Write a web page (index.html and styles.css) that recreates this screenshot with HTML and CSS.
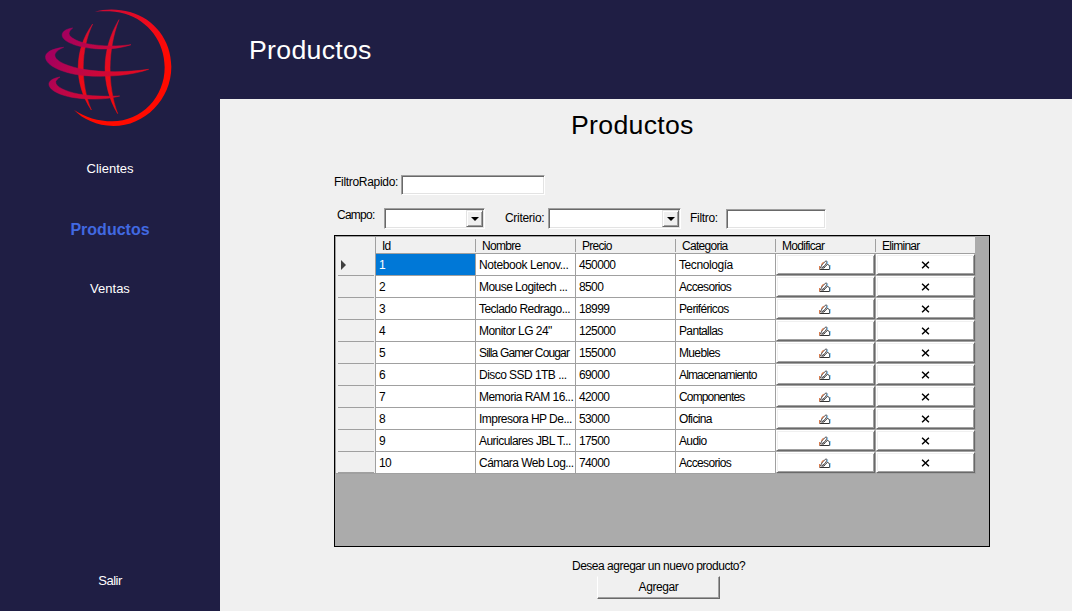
FILE: index.html
```html
<!DOCTYPE html>
<html lang="es">
<head>
<meta charset="utf-8">
<title>Productos</title>
<link rel="stylesheet" href="styles.css">
</head>
<body>
<svg class="defs" width="0" height="0">
  <symbol id="hand" viewBox="0 0 12 10">
    <path d="M.5 9.5H10.5V5.5L8.5 4.5L7 5.5L5 8H2.5" fill="none" stroke="#333" stroke-width="1"/>
    <path d="M1 8.5L3.5 4L7 .8L8.3 1.8L6 5.5L2.5 8" fill="none" stroke="#4a4a50" stroke-width="1"/>
    <path d="M.6 6V9.4M2.4 4.6L4.6 2.2" stroke="#d87848" stroke-width="1.1"/>
    <path d="M11.2 5V9.5M8.6 1.6V4" stroke="#7cc4f0" stroke-width="1"/>
  </symbol>
  <symbol id="cross" viewBox="0 0 8 8">
    <path d="M.6 .8L7.4 7.2M7.4 .8L.6 7.2" stroke="#000" stroke-width="1.5"/>
  </symbol>
</svg>
<div class="app">
  <aside class="sidebar">
    <svg class="logo" width="160" height="135" viewBox="0 0 480 405">
      <defs>
        <linearGradient id="g" gradientUnits="userSpaceOnUse" x1="90" y1="130" x2="330" y2="290">
          <stop offset="0" stop-color="#a6005d"/><stop offset=".3" stop-color="#bd0648"/><stop offset="1" stop-color="#ef0a16"/>
        </linearGradient>
        <linearGradient id="r" gradientUnits="userSpaceOnUse" x1="180" y1="30" x2="300" y2="240">
          <stop offset="0" stop-color="#c90a38"/><stop offset=".5" stop-color="#ee0a1c"/><stop offset="1" stop-color="#ff0a00"/>
        </linearGradient>
        <linearGradient id="m" gradientUnits="userSpaceOnUse" x1="0" y1="70" x2="0" y2="330">
          <stop offset="0" stop-color="#d80c30"/><stop offset="1" stop-color="#f40a0c"/>
        </linearGradient>
      </defs>
      <path fill="url(#r)" d="M195 35C225 26 265 26 300 36C372 56 424 120 424 200C424 297 345 378 250 378C200 377 160 358 132 330C165 352 205 364 247 364C335 364 404 292 404 202C404 125 355 62 285 41C255 33 225 33 195 35Z"/>
      <path fill="url(#m)" stroke="url(#m)" stroke-width="1.5" d="M188 72C131 150 131 250 184 330C151 250 151 150 188 72ZM267 59C212 150 212 255 263 341C232 255 232 150 267 59Z"/>
      <path fill="url(#g)" stroke="url(#g)" stroke-width="1.5" d="M128 84C105 87 94 97 97 109C103 128 150 143 195 146C235 149 275 144 303 134C265 139 215 140 170 131C135 123 112 108 118 97C119 92 123 88 128 84ZM101 142C65 146 43 158 47 175C53 202 110 222 165 227C235 232 305 226 356 208C290 217 220 218 160 208C105 198 70 180 75 162C78 154 90 146 101 142ZM90 231C68 235 55 243 57 255C62 277 110 293 160 296C205 299 240 296 269 288C225 290 180 288 145 282C105 274 76 260 77 245C79 240 84 235 90 231Z"/>
    </svg>
    <nav class="menu">
      <a class="item">Clientes</a>
      <a class="item active">Productos</a>
      <a class="item">Ventas</a>
    </nav>
    <a class="item exit">Salir</a>
  </aside>
  <div class="main">
    <header class="topbar">Productos</header>
    <main class="content">
      <h1 class="title">Productos</h1>
      <div class="quick"><label class="quick-label">FiltroRapido:</label><span class="box quick-box"></span></div>
      <div class="filters">
        <label class="campo">Campo:</label>
        <span class="box combo combo-a"><i class="drop"></i></span>
        <label class="criterio">Criterio:</label>
        <span class="box combo combo-b"><i class="drop"></i></span>
        <label class="filtro">Filtro:</label>
        <span class="box filtro-box"></span>
      </div>
      <section class="grid">
        <div class="row head"><span class="rh"></span><span>Id</span><span>Nombre</span><span>Precio</span><span>Categoria</span><span>Modificar</span><span class="end">Eliminar</span></div>
        <div class="row"><span class="rh"><i class="pointer"></i></span><span class="num selected">1</span><span class="dots loose">Notebook Lenov...</span><span class="num">450000</span><span class="loose">Tecnología</span><b><svg class="hand"><use href="#hand"/></svg></b><b><svg class="cross"><use href="#cross"/></svg></b></div>
        <div class="row"><span class="rh"></span><span class="num">2</span><span class="dots">Mouse Logitech ...</span><span class="num">8500</span><span>Accesorios</span><b><svg class="hand"><use href="#hand"/></svg></b><b><svg class="cross"><use href="#cross"/></svg></b></div>
        <div class="row"><span class="rh"></span><span class="num">3</span><span class="dots">Teclado Redrago...</span><span class="num">18999</span><span>Periféricos</span><b><svg class="hand"><use href="#hand"/></svg></b><b><svg class="cross"><use href="#cross"/></svg></b></div>
        <div class="row"><span class="rh"></span><span class="num">4</span><span class="dots">Monitor LG 24"</span><span class="num">125000</span><span>Pantallas</span><b><svg class="hand"><use href="#hand"/></svg></b><b><svg class="cross"><use href="#cross"/></svg></b></div>
        <div class="row"><span class="rh"></span><span class="num">5</span><span class="tight">Silla Gamer Cougar</span><span class="num">155000</span><span>Muebles</span><b><svg class="hand"><use href="#hand"/></svg></b><b><svg class="cross"><use href="#cross"/></svg></b></div>
        <div class="row"><span class="rh"></span><span class="num">6</span><span class="dots">Disco SSD 1TB ...</span><span class="num">69000</span><span class="tight">Almacenamiento</span><b><svg class="hand"><use href="#hand"/></svg></b><b><svg class="cross"><use href="#cross"/></svg></b></div>
        <div class="row"><span class="rh"></span><span class="num">7</span><span class="dots">Memoria RAM 16...</span><span class="num">42000</span><span class="tight">Componentes</span><b><svg class="hand"><use href="#hand"/></svg></b><b><svg class="cross"><use href="#cross"/></svg></b></div>
        <div class="row"><span class="rh"></span><span class="num">8</span><span class="dots">Impresora HP De...</span><span class="num">53000</span><span>Oficina</span><b><svg class="hand"><use href="#hand"/></svg></b><b><svg class="cross"><use href="#cross"/></svg></b></div>
        <div class="row"><span class="rh"></span><span class="num">9</span><span class="dots">Auriculares JBL T...</span><span class="num">17500</span><span>Audio</span><b><svg class="hand"><use href="#hand"/></svg></b><b><svg class="cross"><use href="#cross"/></svg></b></div>
        <div class="row last"><span class="rh"></span><span class="num">10</span><span class="dots">Cámara Web Log...</span><span class="num">74000</span><span>Accesorios</span><b><svg class="hand"><use href="#hand"/></svg></b><b><svg class="cross"><use href="#cross"/></svg></b></div>
      </section>
      <p class="ask">Desea agregar un nuevo producto?</p>
      <button class="add">Agregar</button>
    </main>
  </div>
</div>
</body>
</html>
```
FILE: styles.css
```css
* { box-sizing: border-box; }
body { margin: 0; font: 12px/14px "Liberation Sans", Arial, sans-serif; letter-spacing: -.49px; color: #000; }
.defs { display: block; }
.app { display: flex; width: 1072px; height: 611px; overflow: hidden; background: #1f1e44; }
.sidebar { width: 220px; display: flex; flex-direction: column; }
.logo { display: block; margin-left: 30px; flex: none; }
.menu { display: flex; flex-direction: column; padding-top: 24px; gap: 40px; }
.item { font-size: 13px; line-height: 20px; letter-spacing: 0; color: #fff; text-align: center; }
.item.active { font-size: 16px; font-weight: bold; color: #4169e1; padding-top: 1px; margin-bottom: -1px; }
.item.exit { margin-top: auto; margin-bottom: 20px; letter-spacing: -.5px; }
.main { width: 852px; display: flex; flex-direction: column; }
.topbar { height: 99px; padding: 35px 0 0 29px; font-size: 26.67px; line-height: 30px; letter-spacing: .3px; color: #fff; }
.content { flex: 1; background: #f0f0f0; padding-left: 114px; }
.title { margin: 11px 0 0 237px; font-size: 26.67px; line-height: 30px; letter-spacing: .3px; font-weight: normal; }
.quick { display: flex; margin-top: 35px; height: 20px; }
.quick-label { width: 67px; letter-spacing: -.3px; }
.box { display: block; background: #fff; border: 1px solid; border-color: #a0a0a0 #fff #fff #a0a0a0; box-shadow: inset 1px 1px #696969, inset -1px -1px #e3e3e3; }
.quick-box { width: 144px; height: 20px; }
.filters { display: flex; height: 27px; margin-top: 13px; }
.campo { width: 50px; padding-left: 3px; letter-spacing: -.75px; }
.criterio { width: 63px; padding: 3px 0 0 20px; letter-spacing: -.3px; }
.filtro { width: 45px; padding: 3px 0 0 9px; letter-spacing: -.3px; }
.combo { display: flex; justify-content: flex-end; height: 21px; padding: 1px; }
.combo-a { width: 101px; }
.combo-b { width: 133px; }
.filtro-box { width: 100px; height: 20px; margin-top: 1px; }
.drop { width: 17px; height: 17px; background: #f0f0f0; border: 1px solid; border-color: #e3e3e3 #696969 #696969 #e3e3e3; box-shadow: inset 1px 1px #fff, inset -1px -1px #a0a0a0; display: flex; align-items: center; justify-content: center; }
.drop::before { content: ""; border: 4px solid transparent; border-top-color: #000; border-bottom: 0; margin-top: 1px; }
.grid { width: 656px; height: 312px; background: #ababab; border: 1px solid #000; }
.row { display: grid; grid-template-columns: 41px repeat(6, 100px); height: 22px; width: 641px; }
.row > span { background: #fff; border-right: 1px solid #a0a0a0; border-bottom: 1px solid #a0a0a0; padding: 4px 0 0 3px; white-space: nowrap; letter-spacing: -.65px; }
.row > .num { letter-spacing: -.62px; }
.row > .dots { letter-spacing: -.54px; }
.row > .tight { letter-spacing: -.85px; }
.row > .loose { letter-spacing: -.42px; }
.row > .selected { background: #0078d7; color: #fff; }
.row > .rh { background: linear-gradient(#a0a0a0, #a0a0a0) 2px 100% / 36px 1px no-repeat #f0f0f0; border-bottom: 0; border-left: 1px solid #a0a0a0; padding: 6px 0 0 5px; }
.row.last > .rh { border-bottom: 1px solid #a0a0a0; }
.row.head { height: 18px; }
.row.head > span { background: linear-gradient(#a0a0a0, #a0a0a0) 100% 2px / 1px 13px no-repeat #f0f0f0; border-right: 0; border-top: 1px solid #a0a0a0; padding: 2px 0 0 6px; letter-spacing: -.72px; }
.row.head > .rh { border-right: 1px solid #a0a0a0; background: #f0f0f0; }
.row.head > .end { background: #f0f0f0; margin-right: 1px; }
.pointer { display: block; width: 0; border: 5px solid transparent; border-left-color: #404040; border-right: 0; }
.row b { display: flex; align-items: center; justify-content: center; background: #fff; margin: 0 1px 1px 0; border: 1px solid; border-color: #fff #696969 #696969 #fff; box-shadow: inset 1px 1px #f0f0f0, inset -1px -1px #a0a0a0, 1px 1px #a0a0a0; }
.hand { width: 12px; height: 10px; margin: 1px 1px 0 0; }
.cross { width: 9px; height: 8px; margin: 1px 0 0; }
.ask { margin: 12px 0 0 238px; }
.add { display: block; margin: 3px 0 0 263px; width: 123px; height: 23px; padding: 0 0 2px; background: #f0f0f0; font: 12px/14px "Liberation Sans", Arial, sans-serif; letter-spacing: -.4px; color: #000; border: 1px solid; border-color: #f0f0f0 #696969 #696969 #fff; box-shadow: inset -1px -1px #a0a0a0; }
```
